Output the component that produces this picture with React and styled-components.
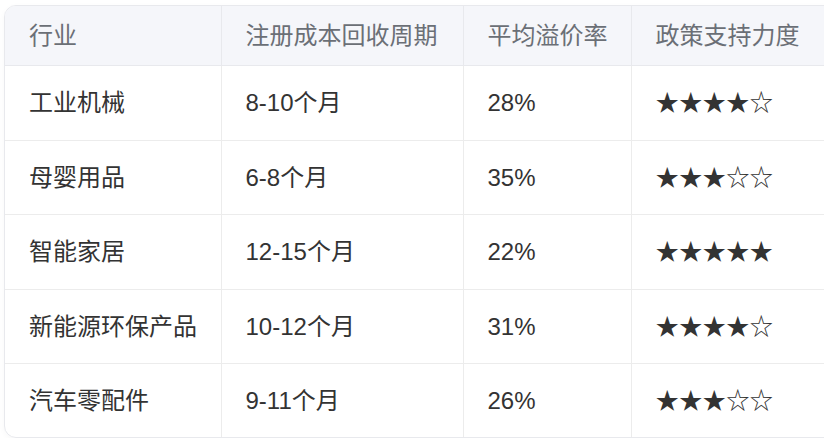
import React from "react";
import styled, { createGlobalStyle } from "styled-components";

const GlobalStyle = createGlobalStyle`
  html, body {
    margin: 0;
    padding: 0;
    background: #ffffff;
    overflow: hidden;
  }
  body {
    font-family: "Liberation Sans", "Noto Sans CJK SC", sans-serif;
  }
`;

const Wrapper = styled.div`
  margin: 5px 0 0 4px;
  width: 860px;
  border: 1px solid #e8e9ed;
  border-radius: 12px;
  overflow: hidden;
  box-shadow: 0 2px 6px rgba(0, 0, 0, 0.03);
`;

const Table = styled.table`
  border-collapse: collapse;
  width: 100%;
  table-layout: fixed;
  font-size: 24px;
  line-height: 37.4px;
`;

const HeadCell = styled.th`
  box-sizing: border-box;
  background: #f5f6fa;
  color: #6b6f76;
  font-weight: 400;
  text-align: left;
  padding: 11px 24px;
  border-right: 1px solid #e8e9ed;
  border-bottom: 1px solid #e8e9ed;
  width: ${(p) => (p.$w ? `${p.$w}px` : "auto")};
  white-space: nowrap;
`;

const Cell = styled.td`
  color: #333333;
  padding: 18px 24px;
  border-right: 1px solid #ececec;
  border-bottom: ${(p) => (p.$last ? "none" : "1px solid #ececec")};
  white-space: nowrap;
`;

const Stars = styled.span`
  font-family: "Noto Sans CJK SC", sans-serif;
  font-size: 23.5px;
  line-height: 1;
  color: #333333;
`;

const columns = [
  { title: "行业", w: 216 },
  { title: "注册成本回收周期", w: 242 },
  { title: "平均溢价率", w: 168 },
  { title: "政策支持力度" },
];

const rows = [
  ["工业机械", "8-10个月", "28%", 4],
  ["母婴用品", "6-8个月", "35%", 3],
  ["智能家居", "12-15个月", "22%", 5],
  ["新能源环保产品", "10-12个月", "31%", 4],
  ["汽车零配件", "9-11个月", "26%", 3],
];

const starText = (n) => "★".repeat(n) + "☆".repeat(5 - n);

export default function App() {
  return (
    <>
      <GlobalStyle />
      <Wrapper>
        <Table>
          <thead>
            <tr>
              {columns.map((c) => (
                <HeadCell key={c.title} $w={c.w}>
                  {c.title}
                </HeadCell>
              ))}
            </tr>
          </thead>
          <tbody>
            {rows.map((r, i) => {
              const last = i === rows.length - 1;
              return (
                <tr key={r[0]}>
                  <Cell $last={last}>{r[0]}</Cell>
                  <Cell $last={last}>{r[1]}</Cell>
                  <Cell $last={last}>{r[2]}</Cell>
                  <Cell $last={last}>
                    <Stars>{starText(r[3])}</Stars>
                  </Cell>
                </tr>
              );
            })}
          </tbody>
        </Table>
      </Wrapper>
    </>
  );
}
